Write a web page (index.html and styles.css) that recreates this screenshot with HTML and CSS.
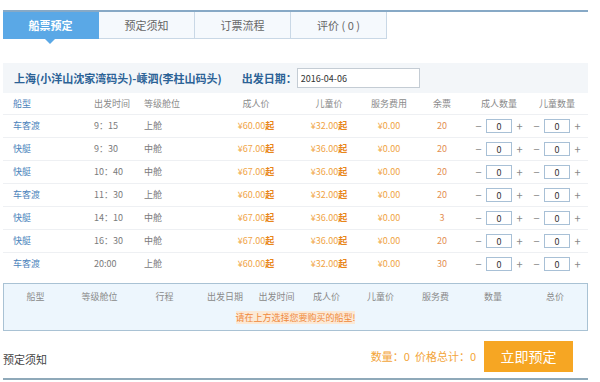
FILE: index.html
```html
<!DOCTYPE html>
<html lang="zh-CN">
<head>
    <meta charset="UTF-8">
    <meta name="viewport" content="width=device-width, initial-scale=1.0">
    <title>船票预定</title>
    <link rel="stylesheet" href="styles.css">
</head>
<body>
    <div class="page">
        <ul class="tabs">
            <li class="tab active">船票预定</li>
            <li class="tab">预定须知</li>
            <li class="tab">订票流程</li>
            <li class="tab">评价 ( 0 )</li>
        </ul>

        <div class="route-bar">
            <span class="route">上海(小洋山沈家湾码头)-嵊泗(李柱山码头)</span>
            <span class="date-label">出发日期：</span>
            <input type="text" class="date-input" value="2016-04-06">
        </div>

        <table class="tickets">
            <colgroup>
                <col style="width:87px"><col style="width:50px"><col style="width:80px">
                <col style="width:72px"><col style="width:74px"><col style="width:46px">
                <col style="width:60px"><col style="width:54px"><col style="width:62px">
            </colgroup>
            <thead>
                <tr>
                    <th class="type">船型</th>
                    <th class="left">出发时间</th>
                    <th class="left">等级舱位</th>
                    <th>成人价</th>
                    <th>儿童价</th>
                    <th>服务费用</th>
                    <th>余票</th>
                    <th>成人数量</th>
                    <th>儿童数量</th>
                </tr>
            </thead>
            <tbody id="rows"></tbody>
        </table>

        <div class="cart">
            <table class="cart-table">
                <colgroup>
                    <col style="width:63px"><col style="width:65px"><col style="width:65px">
                    <col style="width:56px"><col style="width:47px"><col style="width:53px">
                    <col style="width:55px"><col style="width:55px"><col style="width:60px">
                    <col style="width:64px">
                </colgroup>
                <tr>
                    <th>船型</th><th>等级舱位</th><th>行程</th><th>出发日期</th><th>出发时间</th>
                    <th>成人价</th><th>儿童价</th><th>服务费</th><th>数量</th><th>总价</th>
                </tr>
                <tr>
                    <td colspan="10" class="hint"><span>请在上方选择您要购买的船型!</span></td>
                </tr>
            </table>
        </div>

        <div class="footer">
            <span class="notice-title">预定须知</span>
            <span class="summary">数量：0&nbsp; 价格总计：0</span>
            <button class="book-btn">立即预定</button>
        </div>
    </div>

    <script>
        const ships = [
            ['车客渡', '9：15', '上舱', '60.00', '32.00', 20],
            ['快艇', '9：30', '中舱', '67.00', '36.00', 20],
            ['快艇', '10：40', '中舱', '67.00', '36.00', 20],
            ['车客渡', '11：30', '上舱', '60.00', '32.00', 20],
            ['快艇', '14：10', '中舱', '67.00', '36.00', 3],
            ['快艇', '16：30', '中舱', '67.00', '36.00', 20],
            ['车客渡', '20:00', '上舱', '60.00', '32.00', 30]
        ];

        const counter = '<span class="op">−</span><input type="text" class="qty" value="0"><span class="op">+</span>';

        document.getElementById('rows').innerHTML = ships.map(s => `
            <tr>
                <td class="type">${s[0]}</td>
                <td class="left">${s[1]}</td>
                <td class="left">${s[2]}</td>
                <td class="price">¥${s[3]}<b>起</b></td>
                <td class="price">¥${s[4]}<b>起</b></td>
                <td class="price">¥0.00</td>
                <td class="left-num">${s[5]}</td>
                <td>${counter}</td>
                <td>${counter}</td>
            </tr>`).join('');
    </script>
</body>
</html>
```

FILE: styles.css
```css
body {
    margin: 0;
    background-color: #fff;
    font-family: "Noto Sans CJK SC", "Liberation Sans", sans-serif;
    color: #666;
}
.page {
    width: 585px;
    margin-left: 3px;
    padding-top: 10px;
}
.tabs {
    display: flex;
    list-style: none;
    margin: 0;
    padding: 0;
    border-top: 2px solid #87a9c6;
}
.tab {
    position: relative;
    width: 95px;
    height: 26px;
    line-height: 26px;
    text-align: center;
    font-size: 11px;
    color: #666;
    background-color: #f5f9fd;
    border: 1px solid #c9d8e6;
    border-top: none;
    border-left: none;
}
.tab.active {
    background-color: #5aa8e6;
    border-color: #5aa8e6;
    color: #fff;
    font-weight: bold;
}
.tab.active::after {
    content: "";
    position: absolute;
    left: 42px;
    top: 27px;
    border-left: 5px solid transparent;
    border-right: 5px solid transparent;
    border-top: 5px solid #5aa8e6;
}
.route-bar {
    display: flex;
    align-items: center;
    height: 30px;
    margin-top: 24px;
    padding-left: 11px;
    background-color: #f3f6f9;
    font-size: 11px;
    font-weight: bold;
    color: #2b6296;
}
.route {
    margin-right: 20px;
}
.date-input {
    width: 115px;
    height: 18px;
    padding: 0 3px;
    border: 1px solid #c4ccd4;
    font-family: "Noto Sans CJK SC", "Liberation Sans", sans-serif;
    font-size: 9px;
    color: #333;
    background-color: #fff;
}
.tickets {
    width: 585px;
    table-layout: fixed;
    border-collapse: collapse;
    font-size: 9px;
}
.tickets th,
.tickets td {
    height: 22px;
    padding: 0;
    text-align: center;
    font-weight: normal;
    line-height: 12px;
    white-space: nowrap;
}
.tickets th {
    color: #8a8a8a;
    height: 21px;
}
.tickets td {
    color: #7a7a7a;
    border-top: 1px solid #eef0f3;
}
.tickets .type {
    text-align: left;
    padding-left: 10px;
    color: #4a82bb;
}
.tickets .left {
    text-align: left;
    padding-left: 4px;
}
.tickets .price {
    color: #f0a445;
}
.price b {
    color: #e8861a;
}
.tickets .left-num {
    color: #e39052;
}
.op {
    display: inline-block;
    width: 9px;
    font-size: 11px;
    color: #888;
    vertical-align: middle;
}
.qty {
    width: 26px;
    height: 14px;
    margin: 0 3px;
    padding: 0;
    border: 1px solid #a8c0d6;
    text-align: center;
    font-family: "Noto Sans CJK SC", "Liberation Sans", sans-serif;
    font-size: 9px;
    color: #333;
    vertical-align: middle;
    box-sizing: border-box;
}
.cart {
    margin-top: 8px;
    border: 1px solid #a9c2d4;
    background-color: #edf6fd;
}
.cart-table {
    width: 583px;
    table-layout: fixed;
    border-collapse: collapse;
    font-size: 9px;
}
.cart-table th {
    height: 22px;
    padding: 0;
    font-weight: normal;
    color: #8a8a8a;
    line-height: 12px;
    padding-top: 2px;
}
.cart-table .hint {
    height: 20px;
    padding: 0 0 2px;
    text-align: center;
    line-height: 12px;
}
.hint span {
    color: #f0883a;
    background-color: #fbe9d6;
}
.footer {
    display: flex;
    align-items: center;
    height: 44px;
    margin-top: 3px;
    border-bottom: 2px solid #8fa9b9;
}
.notice-title {
    font-size: 11px;
    color: #444;
    margin-top: 6px;
}
.summary {
    margin-left: auto;
    margin-right: 8px;
    font-size: 11px;
    color: #f3a53a;
}
.book-btn {
    width: 89px;
    height: 31px;
    margin-right: 15px;
    border: none;
    background-color: #f6a623;
    color: #fff;
    font-family: "Noto Sans CJK SC", "Liberation Sans", sans-serif;
    font-size: 14px;
    cursor: pointer;
}
```
